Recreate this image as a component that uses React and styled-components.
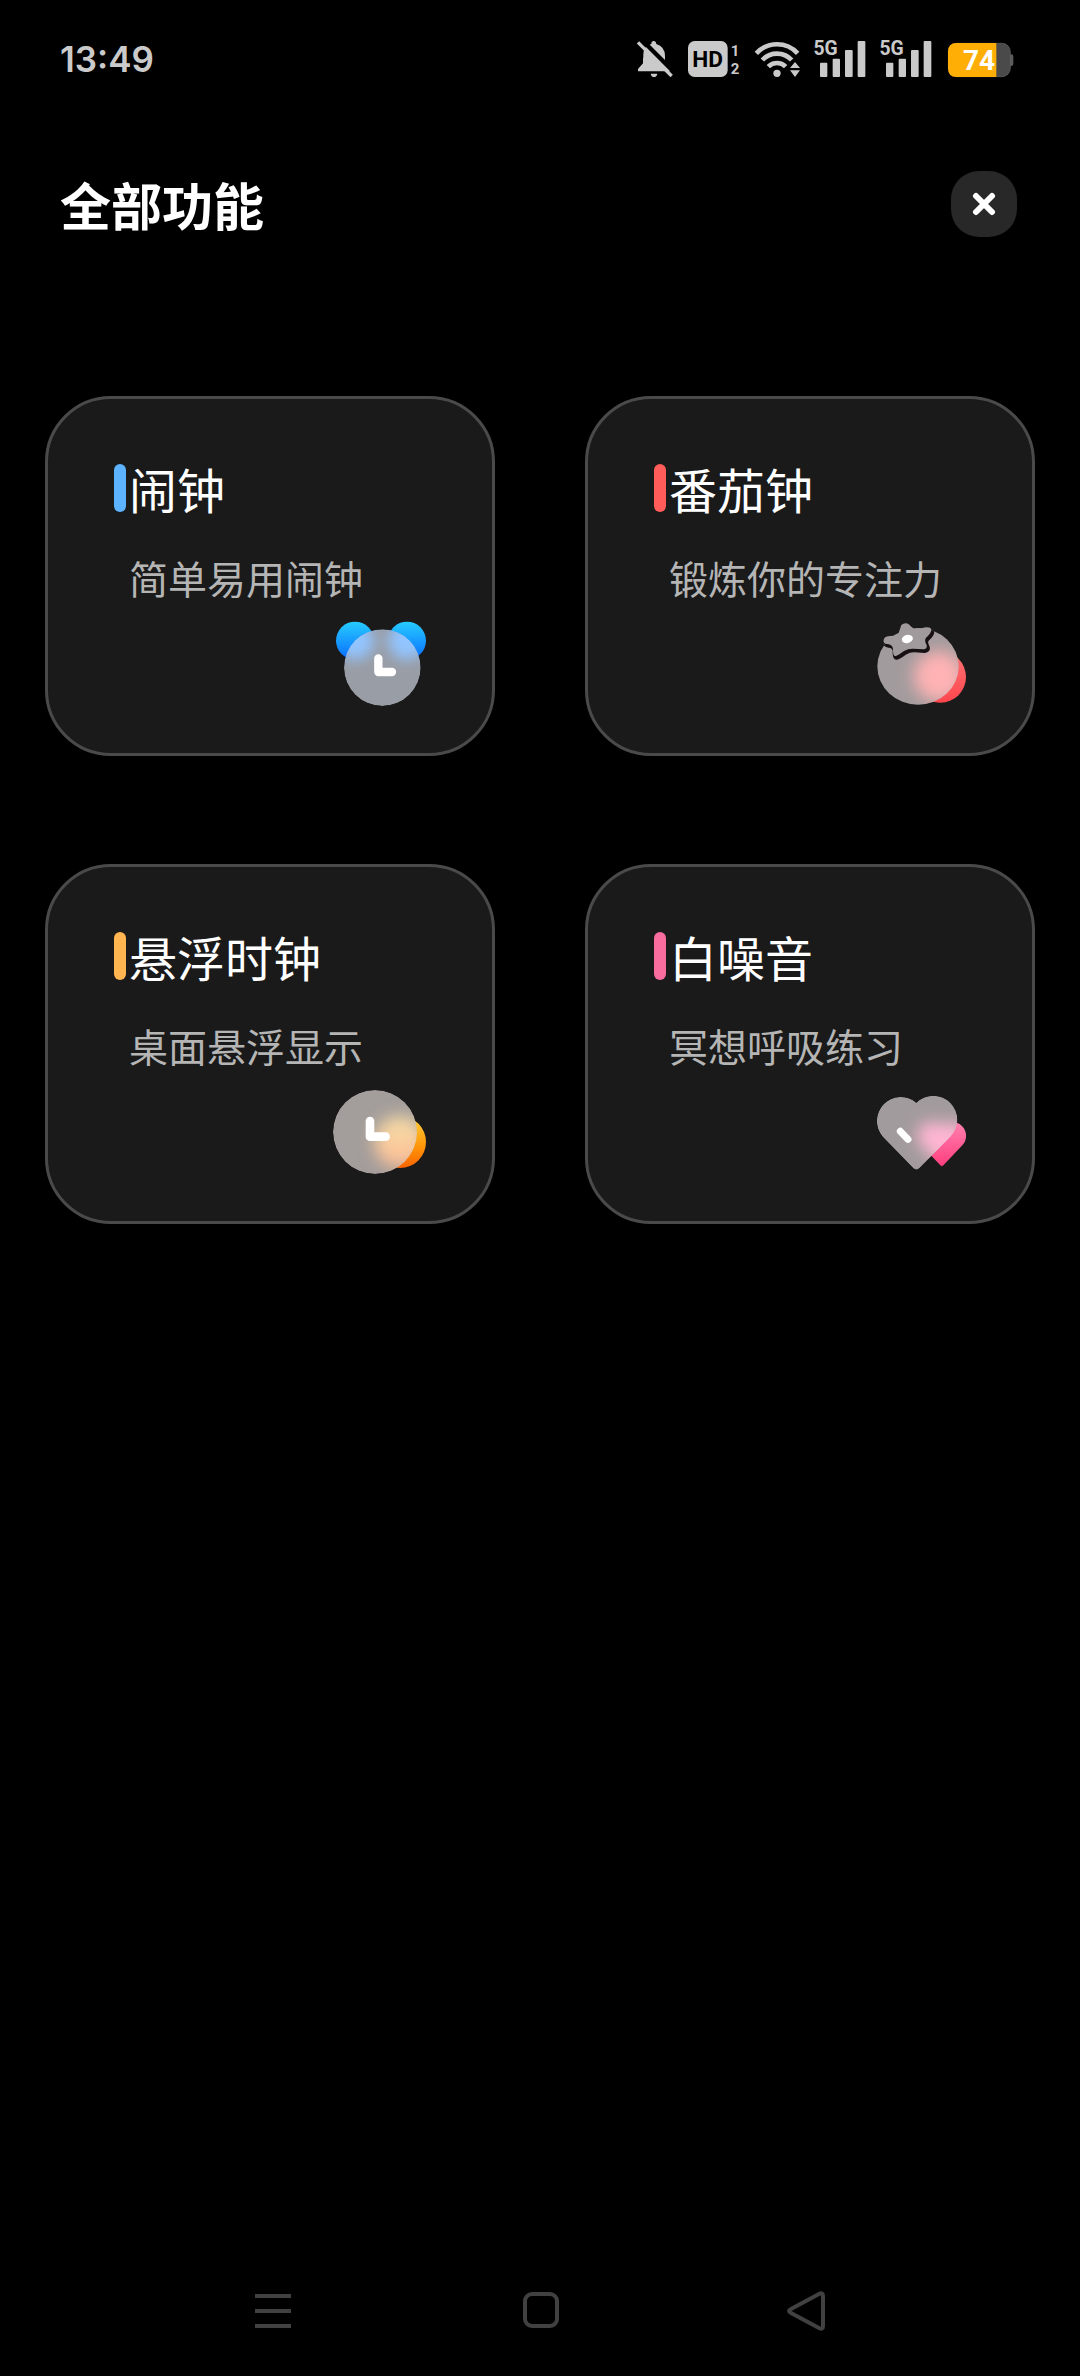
import React from "react";
import styled, { createGlobalStyle } from "styled-components";

const GlobalStyle = createGlobalStyle`
  * {
    box-sizing: border-box;
  }
  body {
    margin: 0;
    background: #000000;
    font-family: "Noto Sans CJK SC", "Noto Sans", sans-serif;
  }
  button {
    font-family: inherit;
    border: 0;
    padding: 0;
    cursor: pointer;
  }
`;

const Page = styled.div`
  display: flex;
  flex-direction: column;
  min-height: 100vh;
`;

const StatusBar = styled.div`
  display: flex;
  align-items: center;
  justify-content: space-between;
  height: 118px;
  padding: 0 66px 0 60px;
`;

const Time = styled.time`
  font-family: Inter, sans-serif;
  font-weight: 600;
  font-size: 35px;
  line-height: 40px;
  color: #cacaca;
`;

const StatusIcons = styled.div`
  display: flex;
  gap: 12px;
`;

const StatusSvg = styled.svg`
  display: block;
  width: ${({ $width }) => $width}px;
  height: 38px;
  fill: #cacaca;
  overflow: visible;
`;

const StatusText = styled.text`
  font-family: Roboto, sans-serif;
  font-weight: 700;
  font-size: ${({ $size }) => $size}px;
  fill: ${({ $color }) => $color || "#cacaca"};
`;

const Header = styled.header`
  display: flex;
  align-items: center;
  justify-content: space-between;
  padding: 53px 63px 0 60px;
`;

const Heading = styled.h1`
  margin: 0;
  font-weight: 700;
  font-size: 51px;
  line-height: 66px;
  color: #ffffff;
`;

const CloseButton = styled.button`
  display: flex;
  align-items: center;
  justify-content: center;
  width: 66px;
  height: 66px;
  border-radius: 28px;
  background: #282828;
`;

const Grid = styled.main`
  display: grid;
  grid-template-columns: 1fr 1fr;
  gap: 108px 90px;
  padding: 159px 45px 0;
`;

const Card = styled.button`
  display: flex;
  flex-direction: column;
  height: 360px;
  && {
    padding: 65px 66px 0;
    border: 3px solid #4a4a4a;
  }
  border-radius: 66px;
  background: #1a1a1a;
  text-align: left;
`;

const CardTitle = styled.span`
  display: flex;
  align-items: center;
  gap: 3px;
  font-size: 48px;
  line-height: 48px;
  color: #ffffff;
  white-space: nowrap;
`;

const Marker = styled.span`
  width: 12px;
  height: 48px;
  border-radius: 6px;
  background: ${({ $color }) => $color};
`;

const Description = styled.span`
  margin: 40px 0 17px 15px;
  font-size: 39px;
  line-height: 50px;
  color: #b5b5b5;
  white-space: nowrap;
`;

const CardSvg = styled.svg`
  display: block;
  align-self: flex-end;
  width: 90px;
  height: 90px;
  overflow: visible;
`;

const NavBar = styled.nav`
  display: flex;
  align-items: center;
  justify-content: space-between;
  margin-top: auto;
  padding: 0 255px 45px;
`;

const NavButton = styled.button`
  width: 38px;
  height: 40px;
  background: none;
`;

const NavSvg = styled.svg`
  display: block;
  fill: none;
  stroke: #414141;
  stroke-width: 4;
  stroke-linejoin: round;
`;

const MutedBell = () => (
  <StatusSvg $width={40} viewBox="48 60 120 114" role="img" aria-label="静音">
    <path d="M54 154V147L69 130V105Q69 79 94 72Q94 63 101 63Q108 63 109 72Q135 80 135 108V130L150 147V154Z" />
    <path d="M92 161H112Q110 171 102 171Q94 171 92 161Z" />
    <path d="M60 54L170 164" stroke="#000000" strokeWidth="13" />
    <path d="M40 84L70 114V84Z" fill="#000000" />
    <path d="M54 67L155 168" stroke="#cacaca" strokeWidth="10" />
  </StatusSvg>
);

const HdIcon = () => (
  <StatusSvg $width={54} viewBox="204 60 162 114">
    <rect x="204" y="63" width="119" height="108" rx="20" />
    <StatusText x="263" y="142" textAnchor="middle" $size={68} $color="#000000">HD</StatusText>
    <StatusText x="345" y="107" textAnchor="middle" $size={45}>1</StatusText>
    <StatusText x="345" y="161" textAnchor="middle" $size={45}>2</StatusText>
  </StatusSvg>
);

const WifiIcon = () => (
  <StatusSvg $width={48} viewBox="402 60 144 114" role="img" aria-label="WLAN">
    <g fill="none" stroke="#cacaca" strokeWidth="14">
      <path d="M409 100A84 84 0 0 1 533 100" />
      <path d="M427 120A60 60 0 0 1 515 120" />
      <path d="M445 140A36 36 0 0 1 497 140" />
    </g>
    <circle cx="471" cy="160" r="11" />
    <path d="M525 116L548 148L525 180L502 148Z" fill="#000000" />
    <path d="M525 126L540 144H510Z" />
    <path d="M525 171L540 151H510Z" />
  </StatusSvg>
);

const SignalIcon = () => (
  <StatusSvg $width={54} viewBox="42 60 162 114">
    <StatusText x="77" y="106" textAnchor="middle" $size={58}>5G</StatusText>
    <rect x="60" y="128" width="22" height="43" rx="3" />
    <rect x="98" y="116" width="22" height="55" rx="3" />
    <rect x="135" y="90" width="23" height="81" rx="3" />
    <rect x="173" y="63" width="23" height="108" rx="3" />
  </StatusSvg>
);

const BatteryIcon = () => (
  <StatusSvg $width={68} viewBox="439 60 204 114">
    <rect x="628" y="103" width="13" height="35" rx="6" fill="#5a5a5a" />
    <rect x="446" y="70" width="186" height="100" rx="25" fill="#4a4a4a" stroke="#666666" strokeWidth="2" />
    <path d="M590 69H470Q445 69 445 95V145Q445 171 470 171H590Z" fill="#ffae05" />
    <StatusText x="538" y="151" textAnchor="middle" $size={84} $color="#ffffff">74</StatusText>
  </StatusSvg>
);

const AlarmIcon = () => (
  <CardSvg viewBox="48 42 270 270" aria-hidden="true">
    <defs>
      <linearGradient id="alarmEar" x1="0" y1="0" x2="0" y2="1">
        <stop offset="0" stopColor="#26ccff" />
        <stop offset="1" stopColor="#0a6cff" />
      </linearGradient>
      <filter id="alarmBlur" x="-50%" y="-50%" width="200%" height="200%">
        <feGaussianBlur stdDeviation="19" />
      </filter>
      <clipPath id="alarmFace">
        <circle cx="187" cy="188" r="115" />
      </clipPath>
    </defs>
    <circle cx="105" cy="107" r="57" fill="url(#alarmEar)" />
    <circle cx="261" cy="107" r="57" fill="url(#alarmEar)" />
    <g clipPath="url(#alarmFace)">
      <circle cx="187" cy="188" r="115" fill="#999da6" />
      <g filter="url(#alarmBlur)" fill="#92c4ff">
        <circle cx="105" cy="107" r="57" />
        <circle cx="261" cy="107" r="57" />
      </g>
    </g>
    <path d="M175 160V201H216" fill="none" stroke="#ffffff" strokeWidth="25" strokeLinecap="round" strokeLinejoin="round" />
  </CardSvg>
);

const LEAF =
  "M71 104Q68 116 82 117Q98 118 99 132Q98 156 108 153Q116 150 132 138Q146 130 160 131L190 133Q203 132 200 120Q192 106 198 98Q214 84 214 74Q212 66 198 67Q172 74 160 70Q152 64 148 59Q136 50 124 60Q120 72 116 84Q110 92 92 93Q72 94 71 104Z";

const TomatoIcon = () => (
  <CardSvg viewBox="48 42 270 270" aria-hidden="true">
    <defs>
      <linearGradient id="tomatoBack" x1="0" y1="0" x2="0" y2="1">
        <stop offset="0" stopColor="#ff7474" />
        <stop offset="1" stopColor="#ff464e" />
      </linearGradient>
      <filter id="tomatoBlur" x="-50%" y="-50%" width="200%" height="200%">
        <feGaussianBlur stdDeviation="24" />
      </filter>
      <clipPath id="tomatoBody">
        <ellipse cx="174" cy="184" rx="122" ry="115" />
      </clipPath>
    </defs>
    <circle cx="241" cy="216" r="77" fill="url(#tomatoBack)" />
    <g clipPath="url(#tomatoBody)">
      <rect x="48" y="60" width="260" height="245" fill="#a29b9d" />
      <circle cx="237" cy="214" r="76" fill="#ffb2b4" filter="url(#tomatoBlur)" />
      <path d={LEAF} transform="translate(4 6)" fill="#171114" stroke="#171114" strokeWidth="10" />
    </g>
    <path d={LEAF} fill="#a09a9d" />
    <ellipse cx="142" cy="102" rx="17" ry="12" fill="#ffffff" transform="rotate(-14 142 102)" />
  </CardSvg>
);

const FloatClockIcon = () => (
  <CardSvg viewBox="48 51 270 270" aria-hidden="true">
    <defs>
      <linearGradient id="floatBack" x1="0" y1="0" x2="0" y2="1">
        <stop offset="0" stopColor="#ffd23c" />
        <stop offset="0.6" stopColor="#ff9408" />
        <stop offset="1" stopColor="#fa6400" />
      </linearGradient>
      <linearGradient id="floatGlow" x1="0" y1="0" x2="0" y2="1">
        <stop offset="0" stopColor="#f6e0a8" />
        <stop offset="1" stopColor="#fdba94" />
      </linearGradient>
      <filter id="floatBlur" x="-50%" y="-50%" width="200%" height="200%">
        <feGaussianBlur stdDeviation="24" />
      </filter>
      <clipPath id="floatFace">
        <circle cx="165" cy="186" r="126" />
      </clipPath>
    </defs>
    <circle cx="240" cy="216" r="78" fill="url(#floatBack)" />
    <g clipPath="url(#floatFace)">
      <circle cx="165" cy="186" r="126" fill="#a39d9b" />
      <circle cx="240" cy="216" r="78" fill="url(#floatGlow)" filter="url(#floatBlur)" />
    </g>
    <path d="M150 153V200H197" fill="none" stroke="#ffffff" strokeWidth="26" strokeLinecap="round" strokeLinejoin="round" />
  </CardSvg>
);

const HEART = "M169 98A72 72 0 0 0 68 200L160 295Q169 303 178 295L271 200A72 72 0 0 0 169 98Z";
const SMALL_HEART = "M246 169A41 41 0 0 0 184 226L241 286Q245 291 250 286L307 226A41 41 0 0 0 246 169Z";

const HeartIcon = () => (
  <CardSvg viewBox="48 51 270 270" aria-hidden="true">
    <defs>
      <linearGradient id="heartBack" x1="0" y1="0" x2="0" y2="1">
        <stop offset="0" stopColor="#ff82ae" />
        <stop offset="1" stopColor="#ff3f80" />
      </linearGradient>
      <filter id="heartBlur" x="-50%" y="-50%" width="200%" height="200%">
        <feGaussianBlur stdDeviation="22" />
      </filter>
      <clipPath id="heartFront">
        <path d={HEART} />
      </clipPath>
    </defs>
    <path d={SMALL_HEART} fill="url(#heartBack)" />
    <g clipPath="url(#heartFront)">
      <path d={HEART} fill="#a29b9d" />
      <path d={SMALL_HEART} fill="#ffb6d2" filter="url(#heartBlur)" />
    </g>
    <path d="M121 184L144 208" stroke="#ffffff" strokeWidth="21" strokeLinecap="round" />
  </CardSvg>
);

const features = [
  { title: "闹钟", description: "简单易用闹钟", color: "#5cb3ff", Icon: AlarmIcon },
  { title: "番茄钟", description: "锻炼你的专注力", color: "#ff5c5a", Icon: TomatoIcon },
  { title: "悬浮时钟", description: "桌面悬浮显示", color: "#ffb650", Icon: FloatClockIcon },
  { title: "白噪音", description: "冥想呼吸练习", color: "#f86c9e", Icon: HeartIcon },
];

const App = () => (
  <Page>
    <GlobalStyle />
    <StatusBar>
      <Time>13:49</Time>
      <StatusIcons>
        <MutedBell />
        <HdIcon />
        <WifiIcon />
        <SignalIcon />
        <SignalIcon />
        <BatteryIcon />
      </StatusIcons>
    </StatusBar>

    <Header>
      <Heading>全部功能</Heading>
      <CloseButton aria-label="关闭">
        <svg width="24" height="24" viewBox="0 0 24 24" stroke="#ffffff" strokeWidth="6" strokeLinecap="round">
          <path d="M4 4L20 20M20 4L4 20" />
        </svg>
      </CloseButton>
    </Header>

    <Grid>
      {features.map(({ title, description, color, Icon }) => (
        <Card key={title}>
          <CardTitle>
            <Marker $color={color} />
            {title}
          </CardTitle>
          <Description>{description}</Description>
          <Icon />
        </Card>
      ))}
    </Grid>

    <NavBar>
      <NavButton aria-label="最近任务">
        <NavSvg width="38" height="40" viewBox="0 0 38 40">
          <path d="M0 5H36M0 20H36M0 35H36" />
        </NavSvg>
      </NavButton>
      <NavButton aria-label="主屏幕">
        <NavSvg width="38" height="40" viewBox="0 0 38 40">
          <rect x="4" y="3" width="32" height="32" rx="7" />
        </NavSvg>
      </NavButton>
      <NavButton aria-label="返回">
        <NavSvg width="38" height="40" viewBox="0 0 38 40">
          <path d="M32 3Q36 1 36 5V35Q36 39 32 37L4 22Q0 20 4 18Z" />
        </NavSvg>
      </NavButton>
    </NavBar>
  </Page>
);

export default App;
